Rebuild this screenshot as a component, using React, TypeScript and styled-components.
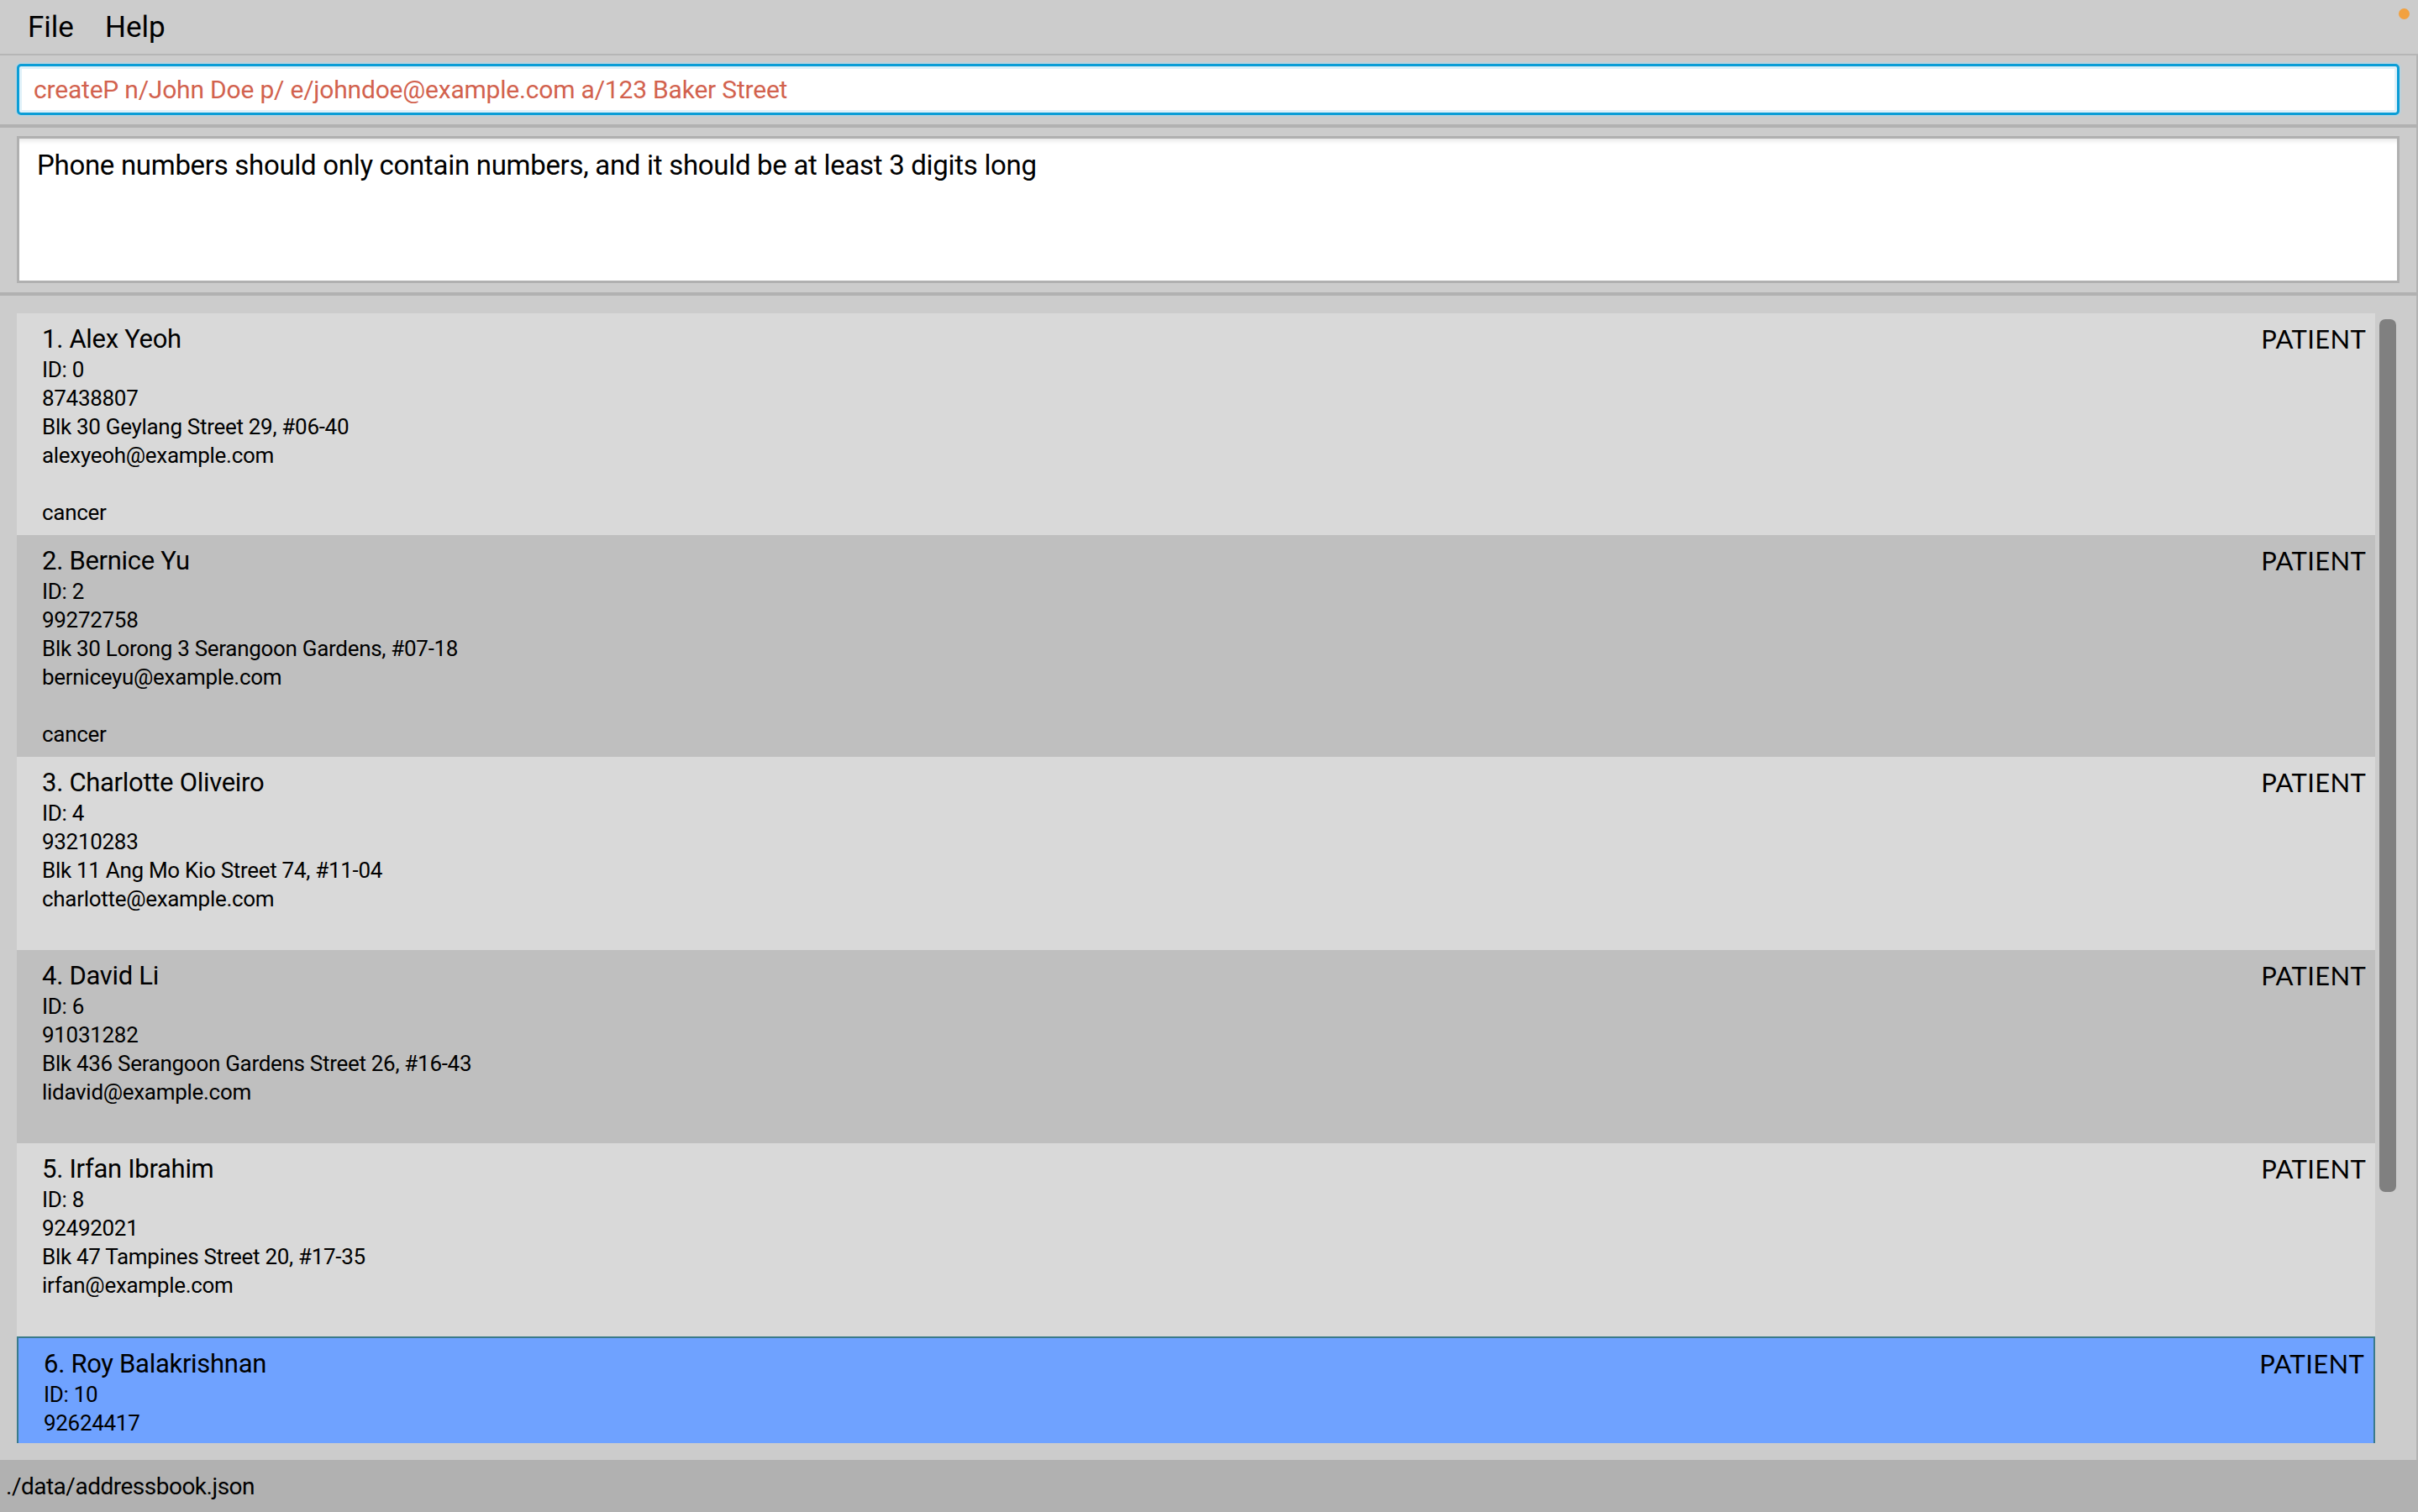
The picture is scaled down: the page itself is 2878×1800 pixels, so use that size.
import styled, { createGlobalStyle } from 'styled-components';

const GlobalStyle = createGlobalStyle`
  html, body {
    margin: 0;
    padding: 0;
    background: #cccccc;
  }
  * {
    box-sizing: border-box;
  }
`

type Person = {
  name: string;
  id: number;
  phone: string;
  address: string;
  email: string;
  tags: string[];
}

const persons: Person[] = [
  { name: 'Alex Yeoh', id: 0, phone: '87438807', address: 'Blk 30 Geylang Street 29, #06-40', email: 'alexyeoh@example.com', tags: ['cancer'] },
  { name: 'Bernice Yu', id: 2, phone: '99272758', address: 'Blk 30 Lorong 3 Serangoon Gardens, #07-18', email: 'berniceyu@example.com', tags: ['cancer'] },
  { name: 'Charlotte Oliveiro', id: 4, phone: '93210283', address: 'Blk 11 Ang Mo Kio Street 74, #11-04', email: 'charlotte@example.com', tags: [] },
  { name: 'David Li', id: 6, phone: '91031282', address: 'Blk 436 Serangoon Gardens Street 26, #16-43', email: 'lidavid@example.com', tags: [] },
  { name: 'Irfan Ibrahim', id: 8, phone: '92492021', address: 'Blk 47 Tampines Street 20, #17-35', email: 'irfan@example.com', tags: [] },
  { name: 'Roy Balakrishnan', id: 10, phone: '92624417', address: 'Blk 45 Aljunied Street 85, #11-31', email: 'royb@example.com', tags: [] },
]

const Window = styled.div`
  width: 2878px;
  height: 1800px;
  display: flex;
  flex-direction: column;
  font-family: Roboto, "Liberation Sans", sans-serif;
  color: #000;
  overflow: hidden;
`

const MenuBar = styled.div`
  height: 66px;
  flex: none;
  display: flex;
  align-items: center;
  padding-left: 33px;
  gap: 37px;
  background: #cccccc;
  border-bottom: 2px solid #b6b6b6;
`

const MenuItem = styled.span`
  font-size: 35px;
  line-height: 1;
`

const StatusDot = styled.span`
  align-self: flex-start;
  margin: 10px 10px 0 auto;
  width: 13px;
  height: 13px;
  border-radius: 50%;
  background: #f2a13f;
`

const Pane = styled.div<{ $pad: string }>`
  flex: none;
  padding: ${p => p.$pad};
  border-right: 2px solid #b3b3b3;
  border-bottom: 4px solid #b1b1b1;
  background: #cccccc;
`

const CommandField = styled.div`
  height: 61px;
  display: flex;
  align-items: center;
  padding-left: 17px;
  background: #fff;
  border: 3px solid #0b9dd6;
  border-radius: 5px;
  box-shadow: inset 0 0 0 3px #e0f1f9, 0 0 0 2px #bcd2dc;
  color: #d2624e;
  font-size: 30px;
  letter-spacing: -0.2px;
  white-space: nowrap;
`

const ResultBox = styled.div`
  height: 175px;
  padding: 11px 21px;
  background: #fff;
  border: 3px solid #b0b0b0;
  box-shadow: inset 0 8px 6px -6px rgba(0, 0, 0, 0.12);
  font-size: 33px;
  line-height: 42px;
  letter-spacing: -0.3px;
`

const ListPane = styled.div`
  flex: 1;
  min-height: 0;
  display: flex;
  gap: 5px;
  padding: 21px 24px 20px 20px;
  border-right: 2px solid #b3b3b3;
`

const CardList = styled.div`
  flex: 1;
  min-width: 0;
  display: flex;
  flex-direction: column;
  overflow: hidden;
`

const Card = styled.div<{ $odd: boolean; $selected: boolean }>`
  flex: none;
  padding: 10px 11px 10px 30px;
  background: ${p => (p.$selected ? '#6fa2ff' : p.$odd ? '#bfbfbf' : '#d9d9d9')};
  border: ${p => (p.$selected ? '2px solid #3a7a8a' : 'none')};
`

const TopRow = styled.div`
  display: flex;
  justify-content: space-between;
  align-items: center;
  height: 40px;
`

const Name = styled.span`
  font-size: 31px;
  letter-spacing: -0.3px;
`

const Role = styled.span`
  font-family: Lato, "Open Sans", sans-serif;
  font-size: 31px;
  letter-spacing: 0.3px;
`

const Line = styled.div`
  height: 34px;
  line-height: 34px;
  font-size: 26px;
  letter-spacing: -0.3px;
  white-space: nowrap;
`

const ScrollTrack = styled.div`
  width: 20px;
  flex: none;
  padding-top: 7px;
`

const Thumb = styled.div`
  height: 1039px;
  border-radius: 7px;
  background: #808080;
`

const StatusBar = styled.div`
  height: 62px;
  flex: none;
  display: flex;
  align-items: center;
  padding-left: 7px;
  background: #b1b1b1;
  font-size: 28px;
  letter-spacing: -0.5px;
`

const PersonCard = ({ person, index, selected }: { person: Person; index: number; selected: boolean }) => (
  <Card $odd={index % 2 === 1} $selected={selected}>
    <TopRow>
      <Name>{index + 1}. {person.name}</Name>
      <Role>PATIENT</Role>
    </TopRow>
    <Line>ID: {person.id}</Line>
    <Line>{person.phone}</Line>
    <Line>{person.address}</Line>
    <Line>{person.email}</Line>
    <Line />
    {person.tags.map(tag => (
      <Line key={tag}>{tag}</Line>
    ))}
  </Card>
)

export default function App() {
  return (
    <>
      <GlobalStyle />
      <Window>
        <MenuBar>
          <MenuItem>File</MenuItem>
          <MenuItem>Help</MenuItem>
          <StatusDot />
        </MenuBar>
        <Pane $pad="10px 20px 11px 20px">
          <CommandField>createP n/John Doe p/ e/johndoe@example.com a/123 Baker Street</CommandField>
        </Pane>
        <Pane $pad="10px 20px 11px 20px">
          <ResultBox>Phone numbers should only contain numbers, and it should be at least 3 digits long</ResultBox>
        </Pane>
        <ListPane>
          <CardList>
            {persons.map((p, i) => (
              <PersonCard key={p.id} person={p} index={i} selected={i === 5} />
            ))}
          </CardList>
          <ScrollTrack>
            <Thumb />
          </ScrollTrack>
        </ListPane>
        <StatusBar>./data/addressbook.json</StatusBar>
      </Window>
    </>
  )
}
